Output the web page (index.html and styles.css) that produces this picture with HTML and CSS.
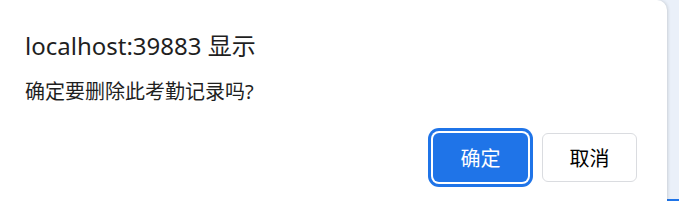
FILE: index.html
```html
<!DOCTYPE html>
<html lang="zh-CN">
<head>
  <meta charset="UTF-8">
  <title>localhost:39883 显示</title>
  <link rel="stylesheet" href="styles.css">
</head>
<body>
  <div class="page">
    <!-- Confirm Dialog -->
    <div class="dialog">
      <h1 class="dialog-title">localhost:39883 显示</h1>
      <p class="dialog-text">确定要删除此考勤记录吗?</p>
      <div class="dialog-actions">
        <button class="btn btn-primary">确定</button>
        <button class="btn btn-cancel">取消</button>
      </div>
    </div>
    <!-- Page behind the dialog -->
    <div class="backdrop"></div>
  </div>
</body>
</html>
```

FILE: styles.css
```css
/* Global Styles */
body {
  margin: 0;
  background-color: #eaf0f9;
  font-family: "Noto Sans", "Noto Sans CJK SC", sans-serif;
  color: #202124;
}

.page {
  display: flex;
  width: 679px;
  height: 201px;
  overflow: hidden;
}

/* Dialog */
.dialog {
  width: 667px;
  flex-shrink: 0;
  background-color: #ffffff;
  border-top-right-radius: 10px;
  box-shadow: 1px 0 3px rgba(60, 64, 67, 0.18);
  padding: 30px 30px 0 25px;
  box-sizing: border-box;
  position: relative;
  z-index: 1;
}
.dialog-title {
  margin: 0;
  font-size: 24px;
  font-weight: normal;
  line-height: 32px;
  color: #1f1f1f;
}
.dialog-text {
  margin: 16px 0 0;
  font-size: 20px;
  line-height: 28px;
  color: #1f1f1f;
}

/* Buttons */
.dialog-actions {
  display: flex;
  justify-content: flex-end;
  gap: 14px;
  margin-top: 27px;
}
.btn {
  width: 95px;
  height: 49px;
  border-radius: 6px;
  font-family: "Noto Sans CJK SC", sans-serif;
  font-size: 20px;
  cursor: pointer;
}
.btn-primary {
  background-color: #1f74e8;
  color: #ffffff;
  border: none;
  box-shadow: 0 0 0 2px #ffffff, 0 0 0 5px #1f74e8;
}
.btn-cancel {
  background-color: #ffffff;
  color: #000000;
  border: 1px solid #dadce0;
}

/* Backdrop strip */
.backdrop {
  flex: 1;
  background-color: #eaf0f9;
  border-bottom: 2px solid #1f74e8;
  box-sizing: border-box;
}
```
